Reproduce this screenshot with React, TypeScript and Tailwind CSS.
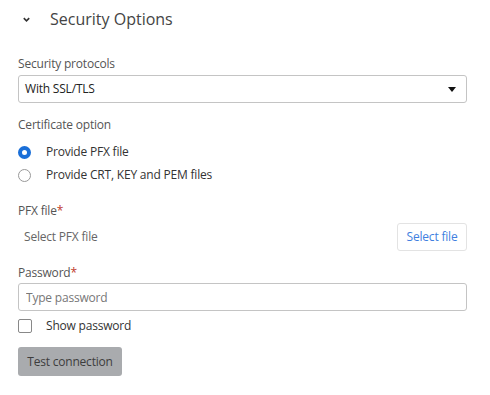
import { useState } from "react";

const font = { fontFamily: '"Open Sans", sans-serif' };

export default function App() {
  const [cert, setCert] = useState("pfx");
  const [show, setShow] = useState(false);

  return (
    <div className="h-[395px] w-[490px] bg-white text-[12px] tracking-[-0.2px] text-[#555]" style={font}>
      <div className="flex h-[37px] items-center pl-[22px]">
        <svg width="9" height="9" viewBox="0 0 10 10" className="mr-[19px] mt-[1px]">
          <path d="M2 3.5 L5 6.5 L8 3.5" fill="none" stroke="#333" strokeWidth="1.8" />
        </svg>
        <h2 className="text-[16px] font-normal tracking-normal text-[#444]">Security Options</h2>
      </div>

      <div className="flex flex-col px-[18px] pr-[23px] pt-[18px]">
        <label className="mb-[2px] leading-[18px]">Security protocols</label>
        <div className="flex h-[28px] items-center justify-between rounded-[3px] border border-[#c4c4c4] pl-[6px] pr-[10px] text-[#222]">
          <span>With SSL/TLS</span>
          <svg width="8" height="5" viewBox="0 0 8 5">
            <path d="M0 0 H8 L4 5 Z" fill="#111" />
          </svg>
        </div>

        <label className="mb-[9px] mt-[13px] leading-[18px]">Certificate option</label>
        <div className="flex flex-col gap-[5px] text-[#333]">
          <button className="flex h-[18px] items-center text-left" onClick={() => setCert("pfx")}>
            <span
              className={
                cert === "pfx"
                  ? "mr-[15px] box-border h-[13px] w-[13px] rounded-full border-[4px] border-[#1a6fd8]"
                  : "mr-[15px] box-border h-[13px] w-[13px] rounded-full border border-[#999]"
              }
            />
            Provide PFX file
          </button>
          <button className="flex h-[18px] items-center text-left" onClick={() => setCert("crt")}>
            <span
              className={
                cert === "crt"
                  ? "mr-[15px] box-border h-[13px] w-[13px] rounded-full border-[4px] border-[#1a6fd8]"
                  : "mr-[15px] box-border h-[13px] w-[13px] rounded-full border border-[#999]"
              }
            />
            Provide CRT, KEY and PEM files
          </button>
        </div>

        <label className="mt-[18px] leading-[18px]">
          PFX file<span className="text-[#c0392b]">*</span>
        </label>
        <div className="mt-[3px] flex h-[28px] items-center justify-between">
          <span className="pl-[6px] text-[#666]">Select PFX file</span>
          <button className="h-[28px] w-[70px] rounded-[3px] border border-[#e3e3e3] text-[#3f7fe0]">
            Select file
          </button>
        </div>

        <label className="mt-[13px] leading-[18px]">
          Password<span className="text-[#c0392b]">*</span>
        </label>
        <input
          type={show ? "text" : "password"}
          placeholder="Type password"
          className="mt-[1px] h-[28px] rounded-[3px] border border-[#c4c4c4] px-[7px] text-[12px] tracking-[-0.2px] text-[#222] outline-none placeholder:text-[#777]"
          style={font}
        />
        <button className="mt-[8px] flex h-[14px] items-center text-left text-[#333]" onClick={() => setShow(!show)}>
          <span className="mr-[14px] box-border h-[14px] w-[14px] rounded-[2px] border border-[#888]" />
          Show password
        </button>

        <button
          disabled
          className="mt-[14px] h-[29px] w-[104px] rounded-[3px] bg-[#a9abae] text-[#3d3d3d]"
          style={font}
        >
          Test connection
        </button>
      </div>
    </div>
  );
}
